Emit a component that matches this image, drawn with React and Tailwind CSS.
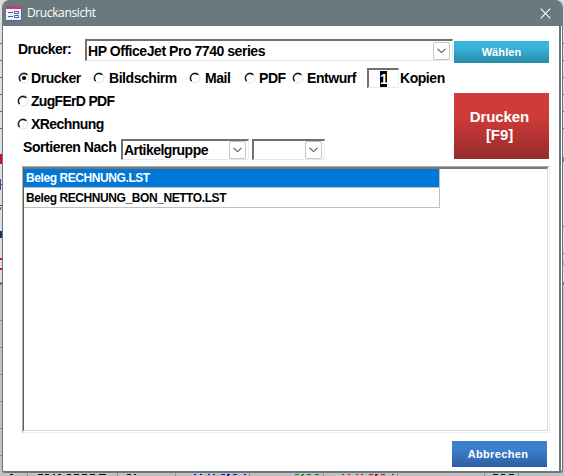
import React, { useState } from "react";

const outputs = [
    { id: "drucker", label: "Drucker", box: "w-[75px]", gap: "pl-px" },
    { id: "bildschirm", label: "Bildschirm", box: "w-[96px]", gap: "pl-1" },
    { id: "mail", label: "Mail", box: "w-[55px]", gap: "pl-1" },
    { id: "pdf", label: "PDF", box: "w-12", gap: "pl-[3px]" },
    { id: "entwurf", label: "Entwurf", box: "w-[75px]", gap: "pl-[3px]" },
];

const files = ["Beleg RECHNUNG.LST", "Beleg RECHNUNG_BON_NETTO.LST"];

function Chevron() {
    return (
        <span className="flex h-[18px] w-[17px] items-center justify-center rounded-[2px] border border-[#c6c6c6] bg-white">
            <svg width="9" height="6" viewBox="0 0 9 6" fill="none" stroke="#555" strokeWidth="1.1">
                <path d="M.5 .8 4.5 4.6 8.5 .8" />
            </svg>
        </span>
    );
}

function Radio({ checked }) {
    return (
        <svg width="12" height="12" viewBox="0 0 12 12" fill="none" className="shrink-0">
            <path d="M9.7 2.3A5 5 0 0 1 11 6a5 5 0 0 1-5 5 5 5 0 0 1-3.7-1.3" stroke="#e0e0e0" />
            <path d="M2.3 9.7A5.2 5.2 0 0 1 .9 6 5.1 5.1 0 0 1 6 .9a5 5 0 0 1 3.8 1.5" stroke="#777" />
            <path d="M2.6 9A4.5 4.5 0 0 1 1.6 6 4.4 4.4 0 0 1 6 1.6a4.4 4.4 0 0 1 3.2 1.3" stroke="#000" strokeWidth="1.1" />
            {checked && <circle cx="6" cy="6" r="2.1" fill="#000" />}
        </svg>
    );
}

function Option({ label, checked, onClick, className, gap }) {
    return (
        <button className={`flex h-4 shrink-0 items-center text-left ${className}`} onClick={onClick}>
            <Radio checked={checked} />
            <span className={`whitespace-nowrap leading-4 ${gap}`}>{label}</span>
        </button>
    );
}

function Combo({ value, className }) {
    return (
        <div
            className={`flex shrink-0 items-center justify-between border-t-2 border-l-2 border-r border-b border-t-[#707070] border-l-[#707070] border-r-[#eee] border-b-[#e8e8e8] bg-white pr-[2px] ${className}`}
        >
            <span className="whitespace-nowrap pl-px leading-4">{value}</span>
            <Chevron />
        </div>
    );
}

function FormIcon() {
    return (
        <svg width="16" height="15" viewBox="0 0 16 15">
            <rect width="16" height="15" fill="#eef1fa" />
            <rect width="16" height="3" fill="#b5476b" />
            <path d="M0 14.5h16M15.5 3v12" stroke="#5566a0" />
            <path d="M2 6.5h5M2 10.5h5" stroke="#4b5c9c" />
            <path d="M8.5 5.5h4v2h-4zM8.5 9.5h4v2h-4z" fill="#fff" stroke="#4b5c9c" />
        </svg>
    );
}

// The table behind the dialog, only its edges are visible
function Backdrop() {
    return (
        <svg className="absolute inset-0" width="564" height="476" viewBox="0 0 564 476">
            <rect width="564" height="284" fill="#dedede" />
            <rect y="284" width="564" height="192" fill="#c2c0c0" />
            <path
                d="M0 43.5h564M0 60.5h564M0 77.5h564M0 94.5h564M0 111.5h564M0 128.5h564M556 226.5h8M556 253.5h8"
                stroke="#666"
            />
            <path d="M0 283.5h564" stroke="#555" strokeWidth="2" />
            <path d="M0 320.5h3M0 347.5h3M0 374.5h3M0 401.5h3M0 428.5h3M0 455.5h3" stroke="#888" />
            <path d="M0 154h2v10h-2z" fill="#c3161c" />
            <path d="M.5 179v11M0 184.5h2M0 205.5h3M1 207l-1 3" stroke="#6b35a8" />
            <path d="M0 231h2v7h-2z" fill="#16306b" />
            <path d="M0 259h3M0 269h3" stroke="#e01010" strokeWidth="2" />
            <path d="M563 157h1v5h-1z" fill="#2795e0" />
            <path d="M563 261h1v5h-1z" fill="#d59ad5" />
            <path d="M27.5 472v4M117.5 472v4M175.5 472v4M249.5 472v4M323.5 472v4M397.5 472v4M484.5 472v4M518.5 472v4" stroke="#929292" />
            <path d="M10 474.5h3M38 474.5h5M45 474.5h4M53 474.5h2M58 474.5h3M67 474.5h4M74 474.5h5M82 474.5h5M90 474.5h5M99 474.5h7M127 474.5h4M134 474.5h2M493 474.5h5M501 474.5h4M509 474.5h5" stroke="#111" />
            <path d="M194 474.5h2M200 474.5h2M208 474.5h2M213 474.5h2M221 474.5h4M227 474.5h3M233 474.5h4M244 474.5h2M227 475.5h2" stroke="#1018c0" />
            <path d="M295 474.5h4M302 474.5h2M307 474.5h4M315 474.5h4M301 475.5h2" stroke="#138013" />
            <path d="M342 474.5h2M348 474.5h2M356 474.5h2M361 474.5h2M369 474.5h4M375 474.5h3M381 474.5h4M392 474.5h2M375 475.5h2" stroke="#c01010" />
        </svg>
    );
}

function App() {
    const [output, setOutput] = useState("drucker");
    const [selected, setSelected] = useState(0);

    return (
        <div className="relative h-[476px] w-[564px] overflow-hidden font-['Liberation_Sans',Arial,sans-serif] text-sm font-bold tracking-[-0.45px] text-black">
            <Backdrop />
            <div className="absolute left-[2px] top-0 flex h-[473px] w-[561px] flex-col overflow-hidden rounded-t-[7px] rounded-b-[3px] border-r border-b-2 border-l border-[#68787d] bg-white">
                <div className="flex h-[26px] shrink-0 items-center bg-[#6a797d] pl-[3px] pr-[11px] text-white">
                    <FormIcon />
                    <span className="grow pl-[5px] font-['Open_Sans',sans-serif] text-xs font-normal leading-4 tracking-[-0.38px]">
                        Druckansicht
                    </span>
                    <svg width="11" height="11" viewBox="0 0 11 11" stroke="#fff" strokeWidth="1.1">
                        <path d="M.7 .7 10.3 10.3M10.3 .7 .7 10.3" />
                    </svg>
                </div>

                <div className="mr-px grow border-r-2 border-[#6b7476] pl-[15px]">
                    <div className="flex h-[37px] pt-[13px]">
                        <span className="w-[67px] shrink-0 pt-0.5 leading-4 tracking-[-0.55px]">Drucker:</span>
                        <Combo value="HP OfficeJet Pro 7740 series" className="h-[22px] w-[368px]" />
                        <button className="mt-[2px] ml-px h-[22px] w-[95px] bg-linear-to-b from-[#37b4d9] from-30% to-[#278aa8] text-[11px] leading-5 tracking-[0.1px] text-white">
                            Wählen
                        </button>
                    </div>

                    <div className="flex h-[30px] pt-[5px]">
                        <div className="flex pt-0.5">
                            {outputs.map((o) => (
                                <Option
                                    key={o.id}
                                    label={o.label}
                                    className={o.box}
                                    gap={o.gap}
                                    checked={output === o.id}
                                    onClick={() => setOutput(o.id)}
                                />
                            ))}
                        </div>
                        <div className="flex h-5 w-8 items-center justify-center border-t-2 border-l-2 border-r border-b border-t-[#707070] border-l-[#707070] border-r-[#eee] border-b-[#e8e8e8]">
                            <span className="h-4 w-[7px] bg-black leading-4 text-white">1</span>
                        </div>
                        <span className="pl-[1px] pt-0.5 leading-4">Kopien</span>
                    </div>

                    <div className="flex h-[73px]">
                        <div className="w-[436px] shrink-0">
                            <Option
                                label="ZugFErD PDF"
                                className="-ml-px"
                                gap="pl-[2px] tracking-[-0.7px]"
                                checked={output === "zugferd"}
                                onClick={() => setOutput("zugferd")}
                            />
                            <Option
                                label="XRechnung"
                                className="mt-[7px] -ml-px"
                                gap="pl-[2px] tracking-[-0.55px]"
                                checked={output === "xrechnung"}
                                onClick={() => setOutput("xrechnung")}
                            />
                            <div className="mt-[7px] flex">
                                <span className="w-[103px] shrink-0 whitespace-nowrap pl-[5px] leading-4">
                                    Sortieren Nach
                                </span>
                                <Combo value="Artikelgruppe" className="h-[21px] w-32 tracking-[-0.55px]" />
                                <Combo value="" className="ml-[3px] h-[21px] w-[73px]" />
                            </div>
                        </div>
                        <button className="h-[66px] w-[95px] bg-linear-to-b from-[#cf3b39] from-35% to-[#962b2b] pr-1 text-[15px] leading-[18px] tracking-[-0.1px] text-white">
                            Drucken
                            <br />
                            [F9]
                        </button>
                    </div>

                    <div className="ml-1 h-[267px] w-[528px] border-t border-r border-b border-l border-t-[#aaa] border-l-[#aaa] border-r-[#eee] border-b-[#eee] pr-px pb-px">
                        <div className="h-full border-t-2 border-l border-r border-b border-t-[#777] border-l-[#606060] border-r-[#ddd] border-b-[#ddd] text-xs">
                            {files.map((file, i) => (
                                <div
                                    key={file}
                                    className={`w-[416px] border-r border-b border-[#c0c0c0] pl-0.5 tracking-[-0.42px] ${
                                        selected === i ? "bg-[#0078d7] text-white" : ""
                                    } ${i === 0 ? "h-[19px] leading-[18px]" : "h-5 leading-5"}`}
                                    onClick={() => setSelected(i)}
                                >
                                    {file}
                                </div>
                            ))}
                        </div>
                    </div>

                    <button className="mt-2 ml-[434px] h-[26px] w-[95px] bg-linear-to-b from-[#3d7fcd] from-35% to-[#2a5e9f] pr-[3px] text-[11px] leading-6 tracking-[0.35px] text-white">
                        Abbrechen
                    </button>
                </div>
            </div>
        </div>
    );
}

export default App;
